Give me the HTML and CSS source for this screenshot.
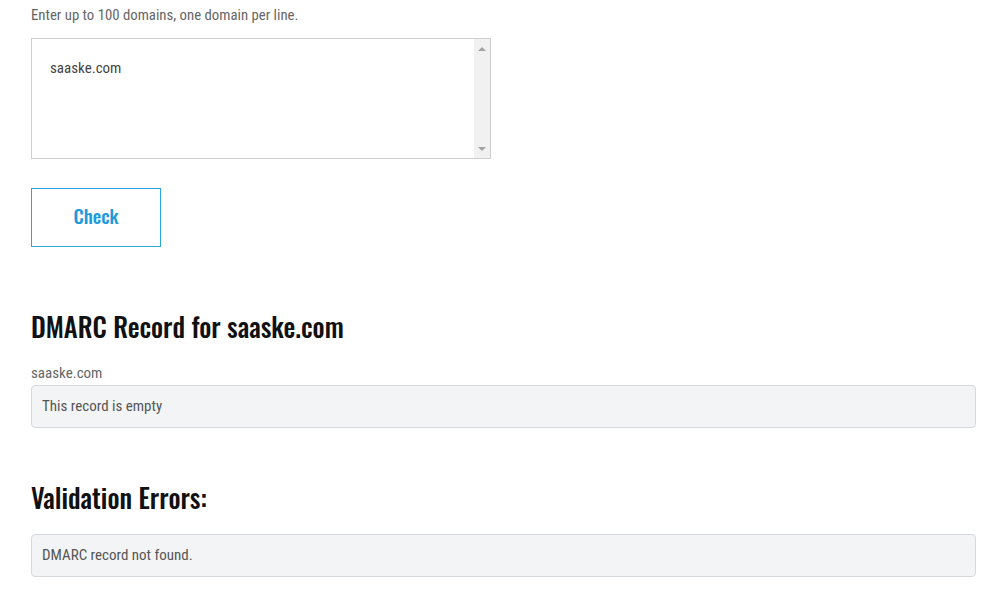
FILE: index.html
```html
<!DOCTYPE html>
<html lang="en">
<head>
<meta charset="utf-8">
<title>DMARC Check</title>
<link rel="stylesheet" href="styles.css">
</head>
<body>
<main class="page">
  <form class="check-form">
    <label class="hint" for="domains">Enter up to 100 domains, one domain per line.</label>
    <div class="textarea-wrap">
      <textarea id="domains" class="domains">saaske.com</textarea>
      <div class="scrollbar" aria-hidden="true">
        <span class="arrow arrow-up"></span>
        <span class="arrow arrow-down"></span>
      </div>
    </div>
    <button type="button" class="check-btn">Check</button>
  </form>

  <section class="result">
    <h2 class="title">DMARC Record for saaske.com</h2>
    <div class="field-label">saaske.com</div>
    <div class="record-box">This record is empty</div>
  </section>

  <section class="result errors">
    <h2 class="title">Validation Errors:</h2>
    <div class="record-box">DMARC record not found.</div>
  </section>
</main>
</body>
</html>
```
FILE: styles.css
```css
html, body {
  margin: 0;
  padding: 0;
  background: #fff;
}
body {
  font-family: "Roboto Condensed", "Liberation Sans", sans-serif;
  color: #555;
  overflow: hidden;
}
.page {
  width: 945px;
  padding: 5px 0 0 31px;
}
.check-form {
  display: flex;
  flex-direction: column;
  align-items: flex-start;
}
.hint {
  font-size: 14.8px;
  line-height: 20px;
  color: #666;
  margin-bottom: 13px;
}
.textarea-wrap {
  box-sizing: border-box;
  width: 460px;
  height: 121px;
  border: 1px solid #cfcfcf;
  display: flex;
}
.domains {
  box-sizing: border-box;
  flex: 1;
  height: 100%;
  border: 0;
  padding: 19px 18px;
  font-family: "Roboto Condensed", "Liberation Sans", sans-serif;
  font-size: 15px;
  line-height: 20px;
  color: #444;
  resize: none;
  overflow: hidden;
  outline: none;
  margin: 0;
  background: #fff;
}
.scrollbar {
  width: 16px;
  background: #f1f1f1;
  display: flex;
  flex-direction: column;
  justify-content: space-between;
  align-items: center;
  padding: 8px 0 7px;
}
.arrow {
  width: 0;
  height: 0;
  border-left: 4px solid transparent;
  border-right: 4px solid transparent;
}
.arrow-up {
  border-bottom: 4px solid #a3a3a3;
}
.arrow-down {
  border-top: 4px solid #a3a3a3;
}
.check-btn {
  box-sizing: border-box;
  margin-top: 29px;
  width: 130px;
  height: 59px;
  background: #fff;
  border: 1px solid #2aa7e2;
  color: #1e9bdb;
  font-family: Oswald, "Roboto Condensed", sans-serif;
  font-weight: 500;
  font-size: 19px;
  padding: 0 0 6px;
  cursor: pointer;
}
.result {
  margin-top: 62px;
}
.title {
  font-family: Oswald, "Roboto Condensed", sans-serif;
  font-weight: 500;
  font-size: 26.5px;
  line-height: 34px;
  color: #111;
  margin: 0 0 21px;
}
.field-label {
  font-size: 15px;
  line-height: 18px;
  color: #666;
  margin-bottom: 3px;
}
.record-box {
  box-sizing: border-box;
  height: 43px;
  display: flex;
  align-items: center;
  padding: 0 10px 1px;
  background: #f3f4f6;
  border: 1px solid #d6d9dc;
  border-radius: 4px;
  font-size: 15px;
  color: #555;
}
.errors {
  margin-top: 52px;
}
.errors .title {
  margin-bottom: 20px;
}
```
